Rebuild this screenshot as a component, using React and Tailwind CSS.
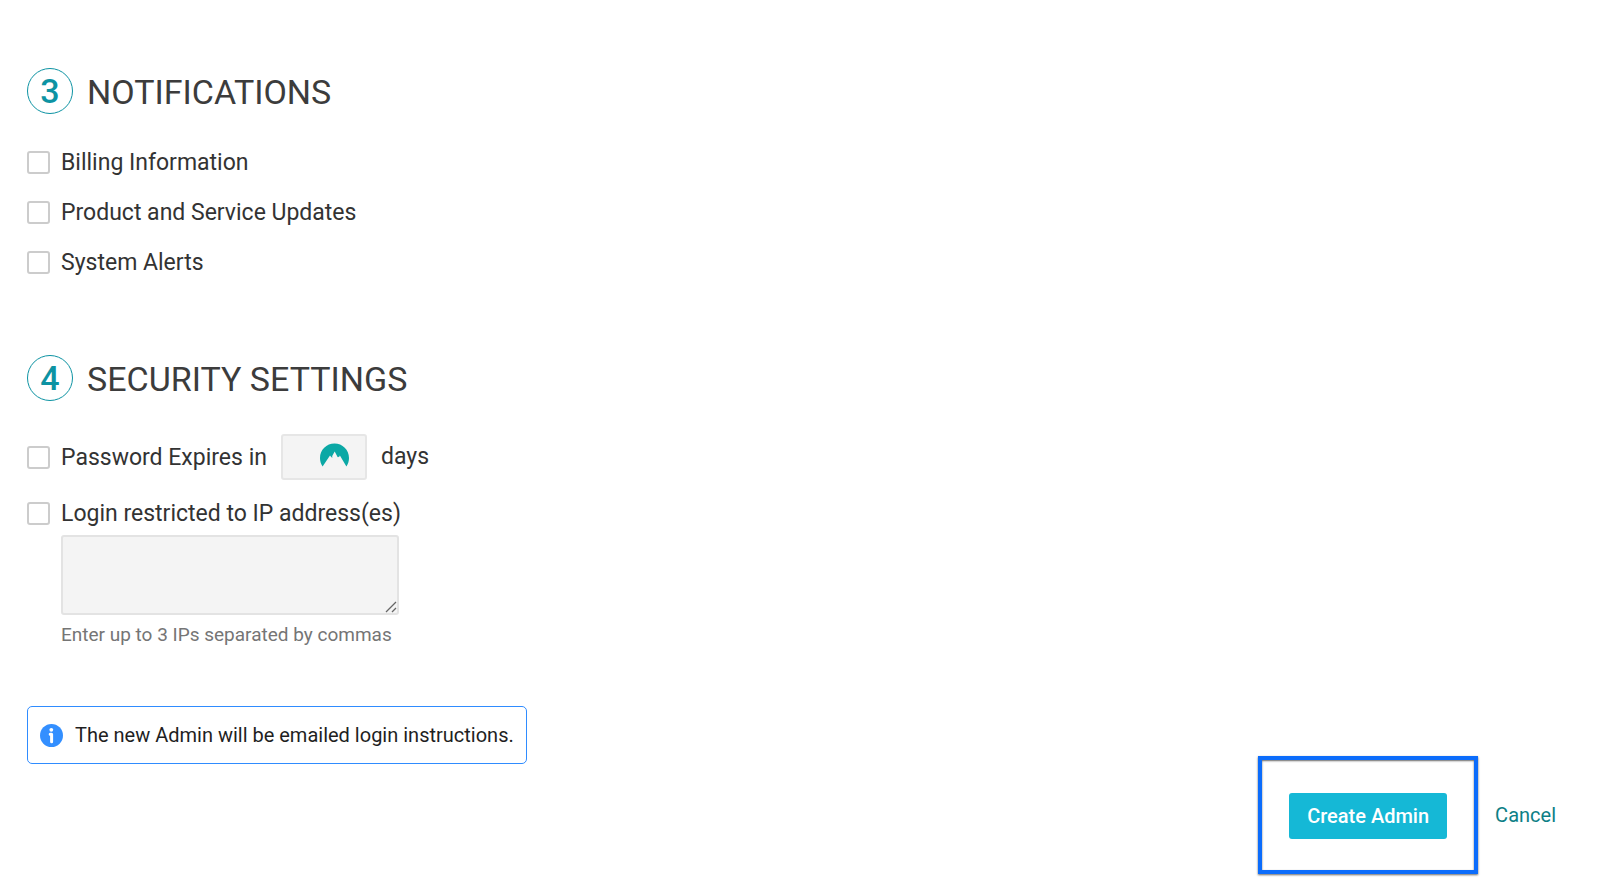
import { useState } from 'react';

const NOTIFICATIONS = [
  { id: 'billing', label: 'Billing Information' },
  { id: 'updates', label: 'Product and Service Updates' },
  { id: 'alerts', label: 'System Alerts' },
];

function StepHeading({ step, children }) {
  return (
    <div className="flex h-[46px] items-center gap-[14px]">
      <span className="flex size-[46px] shrink-0 items-center justify-center rounded-full border border-[#0d93a3] text-[34px] font-medium text-[#0d93a3]">
        {step}
      </span>
      <h2 className="pt-px text-[34px] leading-[46px] text-[#3c3c3c]">{children}</h2>
    </div>
  );
}

function CheckboxField({ id, label, checked, onChange }) {
  return (
    <div className="flex items-center gap-[11px]">
      <input
        id={id}
        type="checkbox"
        checked={checked}
        onChange={onChange}
        className="size-[23px] shrink-0 appearance-none rounded-[3px] border-2 border-[#cccccc] bg-white checked:border-[#0d93a3] checked:bg-[#0d93a3]"
      />
      <label htmlFor={id} className="pt-px text-[23px] leading-7 text-[#333333]">{label}</label>
    </div>
  );
}

function VaultIcon() {
  return (
    <svg viewBox="0 0 29 24" className="h-6 w-[29px]" aria-hidden="true">
      <path
        fill="#0ba8a5"
        d="M2.600 23.500 C0.900 21 0 18.200 0 15 C0 6.700 6.500 0.500 14.500 0.500 C22.500 0.500 29 6.700 29 15 C29 18.200 28.100 21 26.400 23.500 L19.900 12.400 L18.900 14.300 L18.300 13.700 L17.700 14.300 L14.700 8.500 L12.200 13 L12.300 15 L10.800 13.600 L10 12.600 L2.600 23.500 Z"
      />
    </svg>
  );
}

export default function App() {
  const [selected, setSelected] = useState({});
  const [days, setDays] = useState('');
  const [ips, setIps] = useState('');

  const toggle = (id) => setSelected((prev) => ({ ...prev, [id]: !prev[id] }));

  return (
    <form
      className="min-h-screen bg-white px-[27px] pt-[68px] pb-3 font-['Roboto',sans-serif]"
      onSubmit={(e) => e.preventDefault()}
    >
      <section>
        <StepHeading step={3}>NOTIFICATIONS</StepHeading>
        <div className="mt-[34px] flex flex-col gap-[21px]">
          {NOTIFICATIONS.map((n) => (
            <CheckboxField
              key={n.id}
              id={n.id}
              label={n.label}
              checked={!!selected[n.id]}
              onChange={() => toggle(n.id)}
            />
          ))}
        </div>
      </section>

      <section className="mt-[78px]">
        <StepHeading step={4}>SECURITY SETTINGS</StepHeading>
        <div className="mt-[33px] flex items-center gap-[14px]">
          <CheckboxField
            id="expires"
            label="Password Expires in"
            checked={!!selected.expires}
            onChange={() => toggle('expires')}
          />
          <div className="relative">
            <input
              type="text"
              aria-label="Days until the password expires"
              value={days}
              onChange={(e) => setDays(e.target.value)}
              className="block h-[46px] w-[86px] rounded-[3px] border-2 border-[#e6e6e6] bg-[#f4f4f4] pl-2 text-[23px] text-[#333333]"
            />
            <span className="pointer-events-none absolute top-[9px] right-[18px]">
              <VaultIcon />
            </span>
          </div>
          <span className="text-[23px] leading-7 text-[#333333]">days</span>
        </div>

        <div className="mt-[19px]">
          <CheckboxField
            id="restricted"
            label="Login restricted to IP address(es)"
            checked={!!selected.restricted}
            onChange={() => toggle('restricted')}
          />
          <div className="mt-[7px] pl-[34px]">
            <div className="relative w-[338px]">
              <textarea
                aria-label="Allowed IP addresses"
                aria-describedby="ip-hint"
                value={ips}
                onChange={(e) => setIps(e.target.value)}
                className="block h-20 w-full resize-none rounded-[3px] border-2 border-[#e3e3e3] bg-[#f4f4f4] p-2 text-xl text-[#333333]"
              />
              <svg viewBox="0 0 12 12" className="pointer-events-none absolute right-[2px] bottom-[2px] size-3" aria-hidden="true">
                <path d="M1 11 L11 1 M7 11 L11 7" fill="none" stroke="#666" strokeWidth="1.300" />
              </svg>
            </div>
            <p id="ip-hint" className="mt-2 text-[19px] leading-6 text-[#757575]">
              Enter up to 3 IPs separated by commas
            </p>
          </div>
        </div>
      </section>

      <div className="mt-[59px] flex items-start justify-between">
        <div className="flex h-[58px] items-center gap-3 rounded-[5px] border border-[#2f8cff] px-3">
          <svg viewBox="0 0 23 23" className="size-[23px]" aria-hidden="true">
            <circle cx="11.5" cy="11.5" r="11.5" fill="#338fff" />
            <circle cx="11.3" cy="5.800" r="1.900" fill="#fff" />
            <path d="M10.200 10.200 H11.600 V17.700" fill="none" stroke="#fff" strokeWidth="3" strokeLinecap="round" strokeLinejoin="round" />
          </svg>
          <p className="text-[20px] leading-6 text-[#1f1f1f]">The new Admin will be emailed login instructions.</p>
        </div>

        <div className="mt-[50px] mr-[17px] flex items-center gap-[17px]">
          <div className="border-4 border-[#0b6cfb] px-[27px] pt-[33px] pb-[31px] shadow-[0_1px_2px_rgba(0,0,0,0.6),inset_0_1px_2px_rgba(0,0,0,0.6)]">
            <button type="submit" className="block h-[46px] rounded-[3px] bg-[#15b8d6] px-[18px] text-[20px] font-medium text-white">
              Create Admin
            </button>
          </div>
          <a href="#cancel" className="text-[20px] leading-6 text-[#0d7f86]">Cancel</a>
        </div>
      </div>
    </form>
  );
}
